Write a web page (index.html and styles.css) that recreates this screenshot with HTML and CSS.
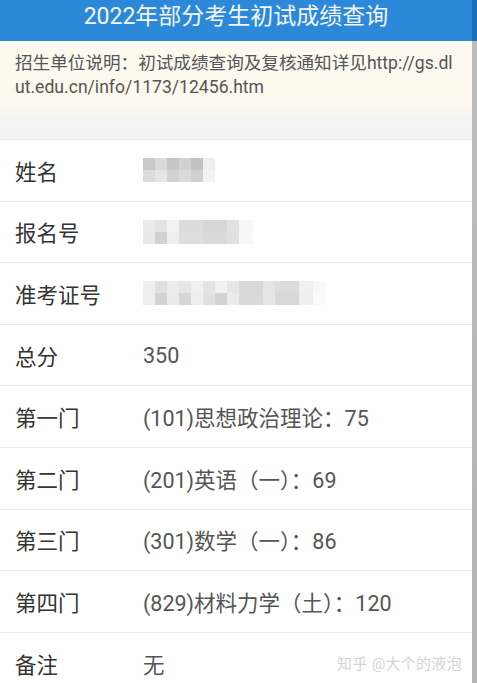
FILE: index.html
```html
<!DOCTYPE html>
<html lang="zh-CN">
<head>
    <meta charset="UTF-8">
    <meta name="viewport" content="width=device-width, initial-scale=1.0">
    <title>2022年部分考生初试成绩查询</title>
    <link rel="stylesheet" href="styles.css">
</head>
<body>

<div class="page">
    <header>
        <h1>2022年部分考生初试成绩查询</h1>
    </header>

    <div class="notice">
        招生单位说明：初试成绩查询及复核通知详见http://gs.dlut.edu.cn/info/1173/12456.htm
    </div>

    <div class="spacer"></div>

    <div class="result">
        <div class="row">
            <span class="label">姓名</span>
            <span class="value"><span class="mosaic mosaic-name"></span></span>
        </div>
        <div class="row">
            <span class="label">报名号</span>
            <span class="value"><span class="mosaic mosaic-reg"></span></span>
        </div>
        <div class="row">
            <span class="label">准考证号</span>
            <span class="value"><span class="mosaic mosaic-exam"></span></span>
        </div>
        <div class="row">
            <span class="label">总分</span>
            <span class="value">350</span>
        </div>
        <div class="row">
            <span class="label">第一门</span>
            <span class="value">(101)思想政治理论：75</span>
        </div>
        <div class="row">
            <span class="label">第二门</span>
            <span class="value">(201)英语（一）：69</span>
        </div>
        <div class="row">
            <span class="label">第三门</span>
            <span class="value">(301)数学（一）：86</span>
        </div>
        <div class="row">
            <span class="label">第四门</span>
            <span class="value">(829)材料力学（土）：120</span>
        </div>
        <div class="row">
            <span class="label">备注</span>
            <span class="value">无</span>
        </div>
    </div>

    <!-- 水印 -->
    <div class="watermark">知乎 @大个的液泡</div>
</div>

<div class="scrollbar"></div>

</body>
</html>
```

FILE: styles.css
```css
body {
    font-family: Roboto, "Noto Sans CJK SC", sans-serif;
    margin: 0;
    padding: 0;
    display: flex;
    height: 683px;
    overflow: hidden;
    background-color: #f3f3f5;
}
.page {
    flex: 1;
    position: relative;
    display: flex;
    flex-direction: column;
}
.page > * {
    flex-shrink: 0;
}
.scrollbar {
    width: 5px;
    background: linear-gradient(to bottom, #1f6db8 0, #1f6db8 41px, #bcbcbc 41px, #b4b4b4 100%);
}
header {
    background-color: #2c89da;
    height: 41px;
    text-align: center;
}
header h1 {
    margin: 0;
    font-size: 23px;
    font-weight: normal;
    line-height: 33px;
    color: #f2f6fb;
}
.notice {
    background-color: #fdf9ee;
    color: #555;
    font-size: 17.6px;
    line-height: 24px;
    padding: 10px 14px 8px 15px;
    word-break: break-all;
}
.spacer {
    height: 32px;
    background: linear-gradient(to bottom, #fbf8ef 0, #f4f4f4 40%, #f2f2f4 100%);
}
.result {
    background-color: #fff;
    border-top: 1px solid #e6e6e8;
    flex: 1;
}
.row {
    display: flex;
    align-items: center;
    box-sizing: border-box;
    height: 61.6px;
    border-bottom: 1px solid #e9e9eb;
    padding-left: 15px;
    font-size: 21.5px;
}
.label {
    width: 128px;
    color: #333;
}
.value {
    color: #555;
}
.mosaic {
    display: block;
    height: 24px;
}
.mosaic-name {
    width: 72px;
    background:
        linear-gradient(to right, #c9c9c9 0 12px, #d9d9d9 12px 24px, #c6c6c6 24px 36px, #d2d2d2 36px 48px, #c2c2c2 48px 60px, #efefef 60px) top / 100% 50% no-repeat,
        linear-gradient(to right, #dcdcdc 0 12px, #e6e6e6 12px 24px, #d2d2d2 24px 36px, #dadada 36px 48px, #d0d0d0 48px 60px, #f3f3f3 60px) bottom / 100% 50% no-repeat;
}
.mosaic-reg {
    width: 110px;
    background:
        linear-gradient(to right, #ebebeb 0 12px, #e4e4e4 12px 24px, #f2f2f2 24px 36px, #dcdcdc 36px 60px, #d7d7d7 60px 84px, #e1e1e1 84px 96px, #f6f6f6 96px) top / 100% 50% no-repeat,
        linear-gradient(to right, #e9e9e9 0 12px, #d2d2d2 12px 24px, #eeeeee 24px 36px, #dddddd 36px 60px, #dadada 60px 84px, #e0e0e0 84px 96px, #f8f8f8 96px) bottom / 100% 50% no-repeat;
}
.mosaic-exam {
    width: 182px;
    background:
        linear-gradient(to right, #eeeeee 0 12px, #e0e0e0 12px 24px, #ececec 24px 36px, #e6e6e6 36px 48px, #f0f0f0 48px 60px, #e3e3e3 60px 72px, #f1f1f1 72px 84px, #e6e6e6 84px 96px, #d9d9d9 96px 120px, #e4e4e4 120px 132px, #dcdcdc 132px 156px, #f0f0f0 156px 170px, #f8f8f8 170px) top / 100% 50% no-repeat,
        linear-gradient(to right, #ededed 0 12px, #d3d3d3 12px 24px, #ebebeb 24px 36px, #d6d6d6 36px 48px, #eeeeee 48px 60px, #e1e1e1 60px 72px, #d2d2d2 72px 84px, #ebebeb 84px 96px, #dadada 96px 120px, #e5e5e5 120px 132px, #d8d8d8 132px 156px, #efefef 156px 170px, #fafafa 170px) bottom / 100% 50% no-repeat;
}
.watermark {
    position: absolute;
    right: 10px;
    bottom: 10px;
    font-size: 15px;
    color: #d4d4d4;
    text-shadow: 0 0 1px #fff;
    letter-spacing: 0.3px;
}
```
